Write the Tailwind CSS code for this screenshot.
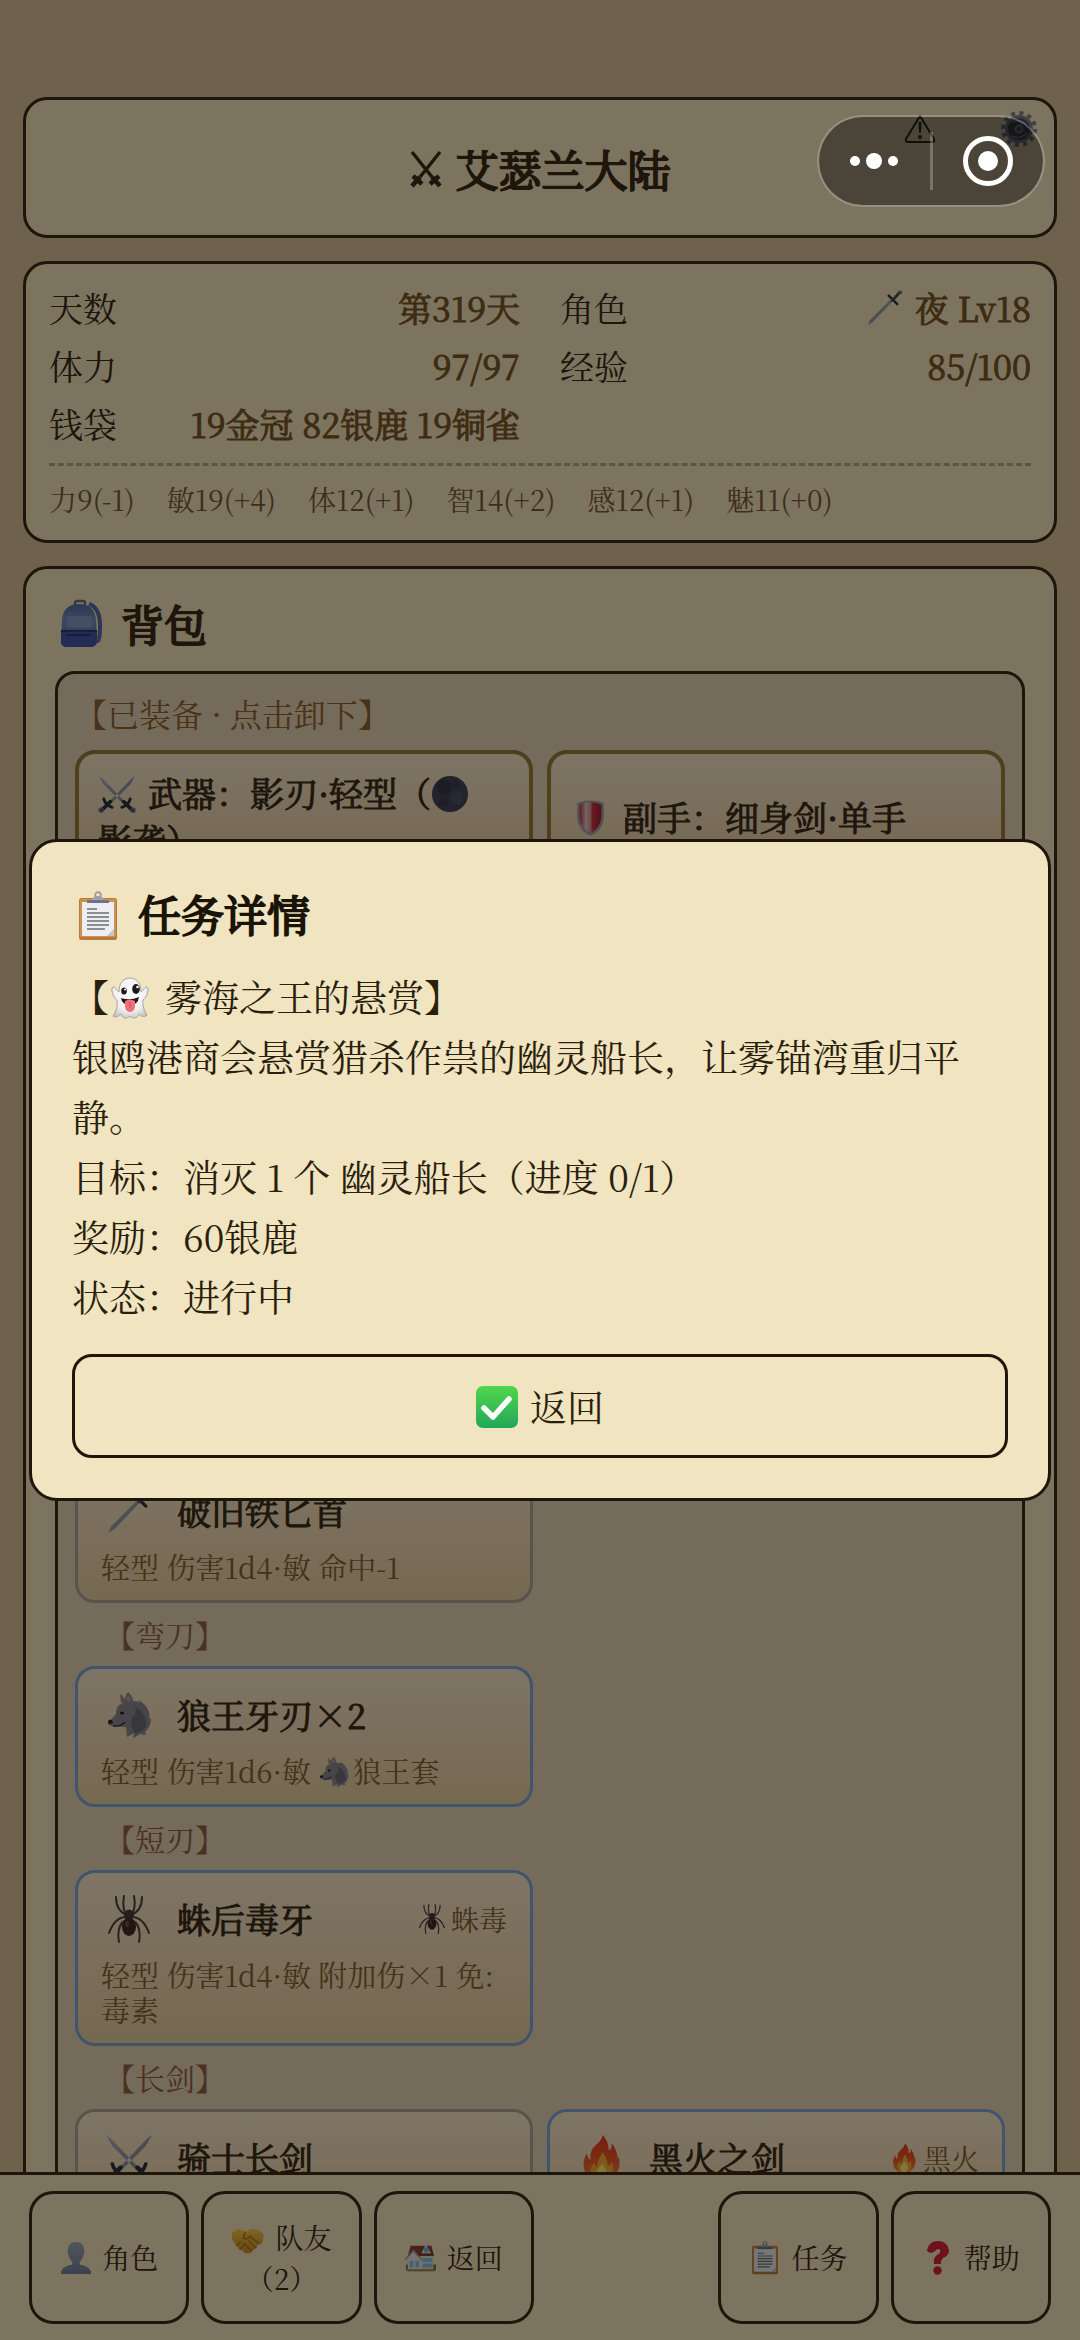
<!DOCTYPE html>
<html lang="zh-CN">
<head>
  <meta charset="utf-8">
  <meta name="viewport" content="width=device-width, initial-scale=1.0">
  <title>艾瑟兰大陆</title>
  <script src="https://cdn.jsdelivr.net/npm/@tailwindcss/browser@4"></script>
</head>
<body class="h-screen overflow-hidden bg-[#dec498] font-['Noto_Serif_CJK_SC','Noto_Sans_CJK_SC',serif] text-[#3c2c16]">

  <!-- 图标库 -->
  <svg class="absolute size-0" xmlns="http://www.w3.org/2000/svg">
    <defs>
      <linearGradient id="steel" x1="0" y1="0" x2="1" y2="1"><stop offset="0" stop-color="#b4b7c4"/><stop offset="1" stop-color="#7c8194"/></linearGradient>
      <linearGradient id="fire" x1="0" y1="0" x2="0" y2="1"><stop offset="0" stop-color="#f2361c"/><stop offset=".6" stop-color="#f4602a"/><stop offset="1" stop-color="#f88c38"/></linearGradient>
      <linearGradient id="person" x1="0" y1="0" x2="0" y2="1"><stop offset="0" stop-color="#a3aabb"/><stop offset="1" stop-color="#7681a0"/></linearGradient>
      <linearGradient id="check" x1="0" y1="0" x2="0" y2="1"><stop offset="0" stop-color="#52d64c"/><stop offset="1" stop-color="#22a75a"/></linearGradient>
      <linearGradient id="bagblue" x1="0" y1="0" x2="0" y2="1"><stop offset="0" stop-color="#5a6cac"/><stop offset=".4" stop-color="#7c94c4"/><stop offset="1" stop-color="#4056a4"/></linearGradient>
      <linearGradient id="shieldred" x1="0" y1="0" x2="1" y2="0"><stop offset="0" stop-color="#b43a40"/><stop offset=".3" stop-color="#ecc8c4"/><stop offset=".5" stop-color="#d89090"/><stop offset=".6" stop-color="#cc3440"/><stop offset="1" stop-color="#a02430"/></linearGradient>
      <radialGradient id="ghostbody" cx=".5" cy=".4" r=".7"><stop offset="0" stop-color="#ffffff"/><stop offset=".6" stop-color="#f0f0f0"/><stop offset="1" stop-color="#bcbcbe"/></radialGradient>
      <linearGradient id="hands" x1="0" y1="0" x2="0" y2="1"><stop offset="0" stop-color="#ffcc48"/><stop offset="1" stop-color="#d08c24"/></linearGradient>
    </defs>
    <symbol id="swords-mono" viewBox="0 0 32 38">
      <path d="M2 2 22 27M30 2 10 27" stroke="currentColor" stroke-width="3.4" fill="none"/>
      <path d="M3 26 12 34M29 26 20 34M10 27 2 36M22 27 30 36" stroke="currentColor" stroke-width="4.6" fill="none"/>
    </symbol>
    <symbol id="warning" viewBox="0 0 32 30">
      <path d="M16 2 30 25Q31 28 28 28H4Q1 28 2 25Z" fill="none" stroke="currentColor" stroke-width="2" stroke-linejoin="round"/>
      <path d="M14.500 8h3l-.6 11h-1.800Z" fill="currentColor"/><circle cx="16" cy="23" r="1.900" fill="currentColor"/>
    </symbol>
    <symbol id="gear" viewBox="0 0 38 38">
      <circle cx="19" cy="19" r="16" fill="none" stroke="#7e8190" stroke-width="4" stroke-dasharray="4 4.370"/>
      <circle cx="19" cy="19" r="12.500" fill="#484b58" stroke="#80838f" stroke-width="3"/>
      <circle cx="19" cy="19" r="3.500" fill="#545664" stroke="#9a9ca8" stroke-width="1.500"/>
      <path d="M10 12Q18 8 26 14M12 26Q20 30 27 23" stroke="#848690" stroke-width="1.500" fill="none"/>
    </symbol>
    <symbol id="dagger" viewBox="0 0 40 40">
      <path d="M3 38 5 33 27 11l2 2L8 35Z" fill="url(#steel)"/>
      <path d="M25 7 34 16" stroke="#33363f" stroke-width="2.600" stroke-linecap="round"/>
      <path d="M29 12 36 4" stroke="#4a4d5a" stroke-width="3" stroke-linecap="round"/>
      <circle cx="37" cy="3.500" r="2" fill="#6c7080"/>
    </symbol>
    <symbol id="swords" viewBox="0 0 40 40">
      <path d="M1 1 5 4 28 28l-2 2L6 10ZM39 1 35 4 12 28l2 2L34 10Z" fill="url(#steel)"/>
      <path d="M6 25Q8 32 15 34M34 25Q32 32 25 34" stroke="#30333e" stroke-width="3" fill="none" stroke-linecap="round"/>
      <path d="M13 28 4 37M27 28 36 37" stroke="#30333e" stroke-width="3.800" stroke-linecap="round"/>
      <circle cx="3" cy="37" r="2.200" fill="none" stroke="#72768a" stroke-width="1.400"/><circle cx="37" cy="37" r="2.200" fill="none" stroke="#72768a" stroke-width="1.400"/>
    </symbol>
    <symbol id="backpack" viewBox="0 0 44 50">
      <path d="M16 7V4Q16 2 18 2h6q2 0 2 2v3" fill="none" stroke="#6c7080" stroke-width="2.400"/>
      <path d="M30 5Q41 9 41 26T38 42" fill="none" stroke="#5a6cac" stroke-width="4"/>
      <path d="M3 20Q5 5 20 5T37 20L38 42Q38 48 30 48H9Q2 48 2 42Z" fill="url(#bagblue)"/>
      <path d="M8 17H33V29H8Z" fill="#90acc8" opacity=".6"/>
      <path d="M2 31H38V43Q37 48 30 48H9Q2 48 2 43Z" fill="#4458a8"/><path d="M2 32H38M7 36H32" stroke="#26346c" stroke-width="1.600"/>
    </symbol>
    <symbol id="newmoon" viewBox="0 0 40 40">
      <circle cx="20" cy="20" r="19" fill="#44465a"/><circle cx="14" cy="13" r="8" fill="#363848"/><circle cx="27" cy="24" r="7" fill="#505268"/><circle cx="13" cy="29" r="5" fill="#3a3c4e"/><circle cx="26" cy="10" r="4" fill="#3c3e50"/>
    </symbol>
    <symbol id="shield" viewBox="0 0 30 40">
      <path d="M1 4Q15-1 29 4V20Q28 33 15 39Q2 33 1 20Z" fill="#a4a4aa"/>
      <path d="M3.500 6Q15 1 26.500 6V20Q25 31 15 36Q5 31 3.500 20Z" fill="url(#shieldred)"/>
    </symbol>
    <symbol id="clipboard" viewBox="0 0 40 50">
      <rect x="1" y="7" width="38" height="42" rx="2.500" fill="#b87a3c"/><rect x="2" y="8" width="36" height="38" rx="1.500" fill="#cc9250"/>
      <path d="M4 11H36V45H4Z" fill="#eeeef0"/><path d="M36 38V45H29Z" fill="#c4c4ca"/>
      <path d="M9 10.500H31" stroke="#70728a" stroke-width="3"/><path d="M14 9q1-4 6-4t6 4Z" fill="#a4a6ae"/>
      <circle cx="20" cy="4" r="2.800" fill="none" stroke="#9a9ca4" stroke-width="1.800"/>
      <path d="M9 18H19M9 22H31M9 26H31M9 30H31M9 34H31M9 38H27" stroke="#6e6e76" stroke-width="1.700"/>
    </symbol>
    <symbol id="ghost" viewBox="0 0 38 42">
      <path d="M19 1C27 1 30 8 30 15 33 13 34 9 36 10 39 12 36 20 32 23 31 29 34 35 36 38 33 41 30 39 28 37 26 42 22 42 19 39 16 42 12 42 10 37 8 39 5 41 2 39 5 35 7 29 6 23 2 20-1 12 2 10 4 9 5 13 8 15 8 8 11 1 19 1Z" fill="url(#ghostbody)" stroke="#a4a4a8" stroke-width="1"/>
      <ellipse cx="13" cy="14" rx="2.800" ry="3.500" fill="#1c1a1a"/><ellipse cx="25" cy="12" rx="3.800" ry="5" fill="#1c1a1a"/>
      <circle cx="14" cy="12.500" r="1" fill="#fff"/><circle cx="26.500" cy="10" r="1.300" fill="#fff"/>
      <path d="M10 21Q19 24 28 20 27 28 19 28T10 21Z" fill="#2a1416"/>
      <path d="M14 24Q19 21 24 24V30Q23 35 19 35T14 30Z" fill="#f0707c"/><path d="M19 25V31" stroke="#c84858" stroke-width="1"/>
    </symbol>
    <symbol id="tick" viewBox="0 0 42 42">
      <rect width="42" height="42" rx="7" fill="url(#check)"/>
      <path d="M8 22 17 31 33 13" fill="none" stroke="#fff" stroke-width="5.500" stroke-linecap="round" stroke-linejoin="round"/>
    </symbol>
    <symbol id="wolf" viewBox="0 0 44 48">
      <path d="M14 12 13 3Q17 5 19 11Z" fill="#a88890"/><path d="M18 14Q17 5 21 1 26 5 26 12Z" fill="#8a8a90"/><path d="M20 12Q19 6 21 3 24 7 24 12Z" fill="#d09aa0"/>
      <path d="M12 14Q22 8 33 11L31 8 38 14Q44 21 42 28L44 27Q44 36 38 41L39 44 33 43Q29 46 26 47L27 42 20 46 19 36Q12 36 5 35 0 34 1 31 6 27 9 23Q9 17 12 14Z" fill="#8c8c92"/>
      <path d="M28 16Q40 22 39 36 34 42 28 42 22 34 25 26Q30 24 28 16Z" fill="#6e6e78"/>
      <ellipse cx="15" cy="22" rx="2" ry="1.600" fill="#202028"/><path d="M1 31Q1 28 5 29L6 32 2 33Z" fill="#28282e"/><path d="M6 35Q13 36 18 31" fill="none" stroke="#34343c" stroke-width="1.400"/>
    </symbol>
    <symbol id="spider" viewBox="0 0 44 48">
      <path d="M20 20Q9 16 9 2M24 20Q35 16 35 2M19 19Q15 13 17 1M25 19Q29 13 27 1M19 22Q8 22 2 38M25 22Q36 22 42 38M19 25Q9 30 12 47M25 25Q35 30 32 47" fill="none" stroke="#54443f" stroke-width="2" stroke-linecap="round" stroke-linejoin="round"/>
      <ellipse cx="22" cy="20" rx="5" ry="5.500" fill="#4c3c38"/><ellipse cx="22" cy="32" rx="7" ry="9" fill="#442c2a"/><ellipse cx="20" cy="29" rx="2" ry="3" fill="#74544e"/>
    </symbol>
    <symbol id="flame" viewBox="0 0 40 50">
      <path d="M22 1Q28 8 28 17 32 16 31 9 38 19 37 25 39 24 38 21 42 36 34 44 28 50 20 50 4 49 2 35 1 28 5 20 6 25 9 27 8 17 14 12 20 8 22 1Z" fill="url(#fire)"/>
      <path d="M22 19Q27 27 27 33 31 32 31 28 35 40 29 46 25 50 20 50 9 48 9 39 9 34 13 30 14 34 16 35 16 27 22 19Z" fill="#ffae34"/>
      <path d="M21 31Q27 37 26 43 25 49 20 49 14 48 14 42 15 38 21 31Z" fill="#fff07a"/>
    </symbol>
    <symbol id="bust" viewBox="0 0 34 36">
      <path d="M17 1Q26 1 26 11 25 18 21 22V25Q33 27 33 35H1Q1 27 13 25V22Q9 18 8 11 8 1 17 1Z" fill="url(#person)"/>
    </symbol>
    <symbol id="handshake" viewBox="0 0 36 30">
      <path d="M1 6 8 2 16 5 22 2 29 3 35 8 33 17 28 19Q28 23 24 24 22 28 18 28 15 29 12 25 8 25 7 21 4 20 4 17L1 13Z" fill="url(#hands)"/>
      <path d="M15 6 13 12Q17 14 20 10L30 18M19 15 26 22M14 17 21 25M7 19 10 16M10 23 14 19" fill="none" stroke="#b0741c" stroke-width="1.400" stroke-linecap="round"/>
    </symbol>
    <symbol id="houses" viewBox="0 0 34 30">
      <path d="M1 22H33V27Q33 29 30 29H4Q1 29 1 27Z" fill="#5a8a4c"/>
      <path d="M6 2H28L31 13H3Z" fill="#8e4430"/><path d="M4 13H30V27H4Z" fill="#e6dccc"/>
      <path d="M1 17 9 8 17 17V27H3V17Z" fill="#f0e4e0"/><path d="M0 17 9 7 18 17" fill="none" stroke="#b89c98" stroke-width="1.600"/>
      <path d="M18 9 22 1 27 9V10H18Z" fill="#e8f0f4"/><rect x="20" y="4" width="5" height="5" fill="#6ab8e0"/>
      <rect x="19" y="15" width="10" height="4" fill="#80c4e4"/><rect x="19" y="21" width="10" height="4" fill="#80c4e4"/><rect x="5" y="18" width="4" height="7" fill="#80c4e4"/><rect x="11" y="18" width="4" height="7" fill="#80c4e4"/>
      <path d="M2 28H32" stroke="#c08858" stroke-width="2"/>
    </symbol>
    <symbol id="question" viewBox="0 0 24 34">
      <path d="M1 9Q3 0 12 0T23 9Q23 15 17 17 15 19 15 23H8Q7 17 11 14 15 12 14 9 12 6 8 11Q2 13 1 9Z" fill="#dc2438"/><circle cx="11.500" cy="29.500" r="4.200" fill="#dc2438"/>
    </symbol>
  </svg>

  <main class="flex flex-col gap-[23px] px-[23px] pt-[97px]">
    <!-- 标题栏 -->
    <header class="relative flex h-[141px] items-center justify-center rounded-3xl border-3 border-[#3c2c16] bg-[#fae8c0]">
      <h1 class="flex items-center gap-3.5 pt-0.5 text-[43px] leading-[60px] [-webkit-text-stroke:2px]">
        <svg class="h-[38px] w-8"><use href="#swords-mono"/></svg>艾瑟兰大陆
      </h1>
      <button class="absolute top-3.5 right-[118px]" aria-label="警告"><svg class="h-[30px] w-8"><use href="#warning"/></svg></button>
      <button class="absolute top-2.5 right-4" aria-label="设置"><svg class="size-[38px]"><use href="#gear"/></svg></button>
    </header>

    <!-- 角色状态 -->
    <section class="rounded-3xl border-3 border-[#3c2c16] bg-[#fae8c0] px-[23px] pt-[18px] pb-[18px]">
      <dl class="grid grid-cols-2 gap-x-10 gap-y-[7px] text-[34px] leading-[51px]">
        <div class="flex justify-between"><dt>天数</dt><dd class="text-[#7c5824] [-webkit-text-stroke:1px]">第319天</dd></div>
        <div class="flex justify-between"><dt>角色</dt><dd class="flex items-center gap-3 text-[#7c5824] [-webkit-text-stroke:1px]"><svg class="size-[38px]"><use href="#dagger"/></svg>夜 Lv18</dd></div>
        <div class="flex justify-between"><dt>体力</dt><dd class="text-[#7c5824] [-webkit-text-stroke:1px]">97/97</dd></div>
        <div class="flex justify-between"><dt>经验</dt><dd class="text-[#7c5824] [-webkit-text-stroke:1px]">85/100</dd></div>
        <div class="flex justify-between"><dt>钱袋</dt><dd class="text-[#7c5824] [-webkit-text-stroke:1px]">19金冠 82银鹿 19铜雀</dd></div>
      </dl>
      <ul class="mt-3.5 flex gap-8 border-t-3 border-dashed border-[#baa884] pt-2.5 text-[28px] leading-[46px] text-[#7a5e38]">
        <li>力9(-1)</li>
        <li>敏19(+4)</li>
        <li>体12(+1)</li>
        <li>智14(+2)</li>
        <li>感12(+1)</li>
        <li>魅11(+0)</li>
      </ul>
    </section>

    <!-- 背包 -->
    <section class="rounded-3xl border-3 border-[#3c2c16] bg-[#fae8c0] px-[29px] pt-6">
      <h2 class="flex items-center gap-[18px] pl-1 text-[43px] leading-[62px] [-webkit-text-stroke:2px]">
        <svg class="h-[50px] w-11"><use href="#backpack"/></svg>背包
      </h2>
      <div class="mt-4 rounded-[20px] border-3 border-[#3c2c16] bg-[#ead6b4] px-[17px] pt-4 pb-10">
        <h3 class="text-[32px] leading-[46px] text-[#946430]">【已装备 · 点击卸下】</h3>
        <div class="mt-3.5 grid grid-cols-2 gap-3.5 text-[34px] leading-[47px] [-webkit-text-stroke:1px]">
          <button class="min-h-[136px] rounded-[20px] border-4 border-[#9c7e3a] bg-linear-to-b from-[#feeaca] to-[#e6cca0] pr-8 pb-1 pl-[19px] text-left">
            <svg class="-mt-3 -mb-1 mr-3 inline size-[38px]"><use href="#swords"/></svg>武器：影刃·轻型（<svg class="-mt-3 -mb-1 inline size-[38px]"><use href="#newmoon"/></svg>影袭）
          </button>
          <button class="min-h-[136px] rounded-[20px] border-4 border-[#9c7e3a] bg-linear-to-b from-[#feeaca] to-[#e6cca0] px-[19px] pb-1 text-left">
            <svg class="-mt-3 -mb-1 mr-[18px] ml-1.5 inline h-[38px] w-[29px]"><use href="#shield"/></svg>副手：细身剑·单手
          </button>
        </div>

        <!-- 未装备的武器，按类型分组 -->
        <div class="mt-[576px] grid grid-cols-2 gap-3.5">
          <button class="rounded-[20px] border-3 border-[#b0a69a] bg-linear-to-b from-[#feeaca] to-[#ecd2a2] px-[23px] pt-4 pb-4 text-left">
            <span class="flex h-[60px] items-center text-[34px] leading-[60px] [-webkit-text-stroke:1px]"><svg class="mr-6 ml-1 size-12"><use href="#dagger"/></svg>破旧铁匕首</span>
            <span class="mt-2 block text-[29px] leading-[35px] text-[#8a6434]">轻型 伤害1d4·敏 命中-1</span>
          </button>
        </div>
        <h3 class="my-2 pl-[30px] text-[30px] leading-[47px] text-[#966440]">【弯刀】</h3>
        <div class="grid grid-cols-2 gap-3.5">
          <button class="rounded-[20px] border-3 border-[#82a8dc] bg-linear-to-b from-[#feeaca] to-[#ecd2a2] px-[23px] pt-4 pb-4 text-left">
            <span class="flex h-[60px] items-center text-[34px] leading-[60px] [-webkit-text-stroke:1px]"><svg class="mr-6 ml-1 size-12"><use href="#wolf"/></svg>狼王牙刃×2</span>
            <span class="mt-2 block text-[29px] leading-[35px] text-[#8a6434]">轻型 伤害1d6·敏 <svg class="-mt-3 -mb-1 mr-0.5 inline size-8"><use href="#wolf"/></svg>狼王套</span>
          </button>
        </div>
        <h3 class="my-2 pl-[30px] text-[30px] leading-[47px] text-[#966440]">【短刃】</h3>
        <div class="grid grid-cols-2 gap-3.5">
          <button class="rounded-[20px] border-3 border-[#82a8dc] bg-linear-to-b from-[#feeaca] to-[#ecd2a2] px-[23px] pt-4 pb-4 text-left">
            <span class="flex h-[60px] items-center text-[34px] leading-[60px] [-webkit-text-stroke:1px]"><svg class="mr-6 ml-1 size-12"><use href="#spider"/></svg>蛛后毒牙<small class="ml-auto flex items-center gap-1 text-[28px] text-[#8a6434] [-webkit-text-stroke:0]"><svg class="size-[30px]"><use href="#spider"/></svg>蛛毒</small></span>
            <span class="mt-2 block text-[29px] leading-[35px] text-[#8a6434]">轻型 伤害1d4·敏 附加伤×1 免:毒素</span>
          </button>
        </div>
        <h3 class="my-2 pl-[30px] text-[30px] leading-[47px] text-[#966440]">【长剑】</h3>
        <div class="grid grid-cols-2 gap-3.5">
          <button class="rounded-[20px] border-3 border-[#b0a69a] bg-linear-to-b from-[#feeaca] to-[#ecd2a2] px-[23px] pt-4 pb-12 text-left">
            <span class="flex h-[60px] items-center text-[34px] leading-[60px] [-webkit-text-stroke:1px]"><svg class="mr-6 ml-1 size-12"><use href="#swords"/></svg>骑士长剑</span>
          </button>
          <button class="rounded-[20px] border-3 border-[#82a8dc] bg-linear-to-b from-[#feeaca] to-[#ecd2a2] px-[23px] pt-4 pb-12 text-left">
            <span class="flex h-[60px] items-center text-[34px] leading-[60px] [-webkit-text-stroke:1px]"><svg class="mr-6 ml-1 size-12"><use href="#flame"/></svg>黑火之剑<small class="ml-auto flex items-center gap-1 text-[28px] text-[#8a6434] [-webkit-text-stroke:0]"><svg class="size-[30px]"><use href="#flame"/></svg>黑火</small></span>
          </button>
        </div>
      </div>
    </section>
  </main>

  <!-- 底部导航 -->
  <nav class="fixed inset-x-0 bottom-0 grid grid-cols-6 gap-3 border-t-3 border-[#3c2c16] bg-[#fae8c0] px-[29px] pt-4 pb-4 text-[28px] leading-[41px]">
    <button class="flex h-[133px] items-center justify-center gap-2.5 rounded-3xl border-3 border-[#3c2c16]"><svg class="h-[34px] w-8"><use href="#bust"/></svg>角色</button>
    <button class="h-[133px] rounded-3xl border-3 border-[#3c2c16] px-4"><svg class="-my-2 mr-2.5 inline h-[30px] w-[34px]"><use href="#handshake"/></svg>队友（2）</button>
    <button class="flex h-[133px] items-center justify-center gap-2.5 rounded-3xl border-3 border-[#3c2c16]"><svg class="h-[30px] w-8"><use href="#houses"/></svg>返回</button>
    <button class="col-start-5 flex h-[133px] items-center justify-center gap-2.5 rounded-3xl border-3 border-[#3c2c16]"><svg class="h-[34px] w-8"><use href="#clipboard"/></svg>任务</button>
    <button class="flex h-[133px] items-center justify-center gap-2.5 rounded-3xl border-3 border-[#3c2c16]"><svg class="h-[34px] w-8"><use href="#question"/></svg>帮助</button>
  </nav>

  <!-- 任务详情弹窗 -->
  <div class="fixed inset-0 flex items-center justify-center bg-black/50 px-[29px]">
    <div role="dialog" aria-labelledby="quest-title" class="w-full rounded-[28px] border-3 border-[#1e160b] bg-[#f1e4c0] p-10 text-[#2a1e0c]">
      <h2 id="quest-title" class="flex items-center gap-5 pl-1.5 text-[43px] leading-[64px] text-[#1a1408] [-webkit-text-stroke:2px]">
        <svg class="mt-1 h-[50px] w-10"><use href="#clipboard"/></svg>任务详情
      </h2>
      <div class="mt-5 text-[37px] leading-[60px]">
        <p>【<svg class="-mt-3 -mb-1 mr-4 ml-0.5 inline h-[42px] w-[38px]"><use href="#ghost"/></svg>雾海之王的悬赏】</p>
        <p>银鸥港商会悬赏猎杀作祟的幽灵船长，让雾锚湾重归平静。</p>
        <p>目标：消灭 1 个 幽灵船长（进度 0/1）</p>
        <p>奖励：60银鹿</p>
        <p>状态：进行中</p>
      </div>
      <button class="mt-7 flex h-[104px] w-full items-center justify-center gap-3 rounded-[20px] border-3 border-[#1e160b] pt-0.5 text-[37px]"><svg class="size-[42px]"><use href="#tick"/></svg>返回</button>
    </div>
  </div>

  <!-- 小程序胶囊按钮 -->
  <div class="fixed top-[115px] right-[35px] flex h-[92px] w-[228px] items-center rounded-full border-2 border-white/20 bg-black/40 bg-clip-padding text-white">
    <button class="flex flex-1 items-center justify-center gap-1.5" aria-label="更多"><span class="size-2.5 rounded-full bg-white"></span><span class="size-4 rounded-full bg-white"></span><span class="size-2.5 rounded-full bg-white"></span></button>
    <span class="h-[58px] w-[3px] bg-white/25"></span>
    <button class="flex flex-1 justify-center" aria-label="关闭"><span class="flex size-[50px] items-center justify-center rounded-full border-5 border-white"><span class="size-5 rounded-full bg-white"></span></span></button>
  </div>
</body>
</html>
